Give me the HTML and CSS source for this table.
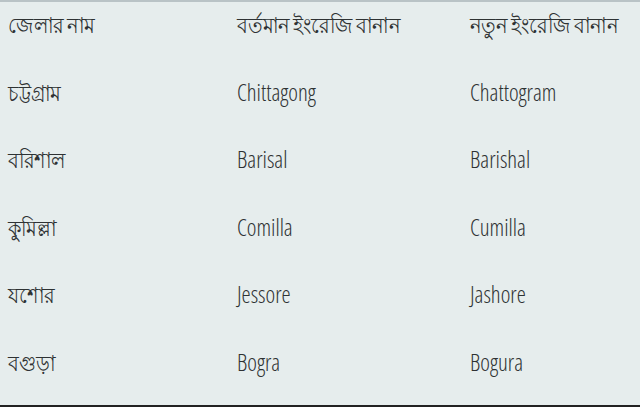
FILE: index.html
```html
<!DOCTYPE html>
<html lang="bn">
<head>
<meta charset="utf-8">
<link rel="stylesheet" href="styles.css">
</head>
<body>
<div class="table">
  <div class="row head">
    <div class="cell"><span class="bn">জেলার নাম</span></div>
    <div class="cell"><span class="bn">বর্তমান ইংরেজি বানান</span></div>
    <div class="cell"><span class="bn">নতুন ইংরেজি বানান</span></div>
  </div>
  <div class="row">
    <div class="cell"><span class="bn">চট্টগ্রাম</span></div>
    <div class="cell">Chittagong</div>
    <div class="cell">Chattogram</div>
  </div>
  <div class="row">
    <div class="cell"><span class="bn">বরিশাল</span></div>
    <div class="cell">Barisal</div>
    <div class="cell">Barishal</div>
  </div>
  <div class="row">
    <div class="cell"><span class="bn">কুমিল্লা</span></div>
    <div class="cell">Comilla</div>
    <div class="cell">Cumilla</div>
  </div>
  <div class="row">
    <div class="cell"><span class="bn">যশোর</span></div>
    <div class="cell">Jessore</div>
    <div class="cell">Jashore</div>
  </div>
  <div class="row">
    <div class="cell"><span class="bn">বগুড়া</span></div>
    <div class="cell">Bogra</div>
    <div class="cell">Bogura</div>
  </div>
</div>
</body>
</html>
```
FILE: styles.css
```css
html, body {
  margin: 0;
  padding: 0;
  background: #e7eded;
}
.table {
  width: 640px;
  height: 407px;
  box-sizing: border-box;
  border-top: 2px solid #b9c3c6;
  border-bottom: 2px solid #222;
  background: #e6eded;
  padding-top: 4px;
  font-family: "Open Sans", "Noto Sans", sans-serif;
  font-stretch: 75%;
  font-weight: 350;
  font-size: 23px;
  color: #2e3233;
}
.row {
  display: grid;
  grid-template-columns: 229px 233px 1fr;
  height: 67.6px;
  padding-left: 8px;
  align-items: start;
}
.cell {
  padding-top: 2px;
  white-space: nowrap;
}
.bn {
  display: inline-block;
  font-size: 22px;
  transform: scaleX(0.88);
  transform-origin: left center;
}
```
